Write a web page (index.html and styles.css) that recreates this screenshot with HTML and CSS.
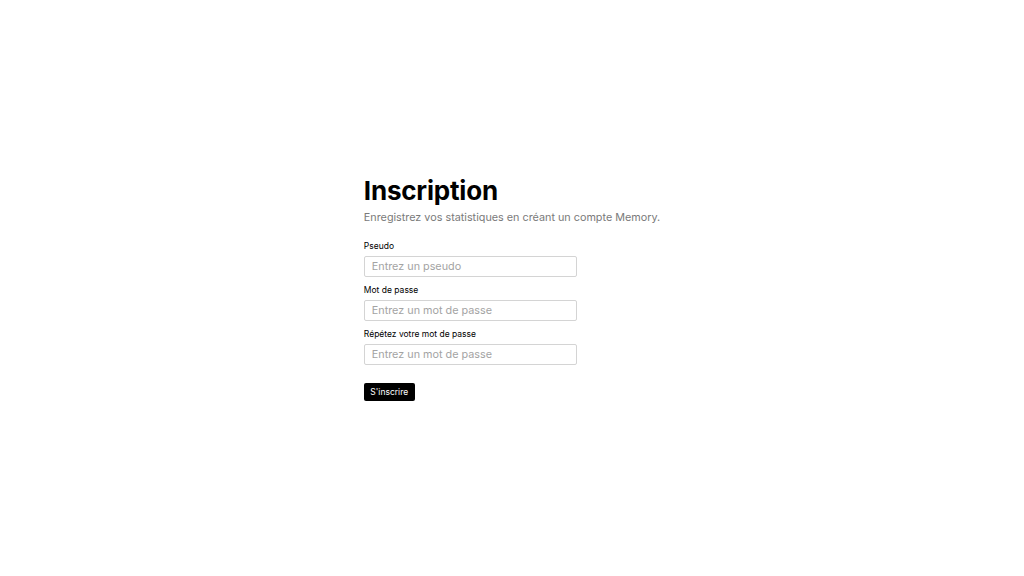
FILE: index.html
```html
<!DOCTYPE html>
<html lang="fr">
<head>
<meta charset="utf-8">
<title>Inscription</title>
<link rel="stylesheet" href="styles.css">
</head>
<body>
<main class="page">
  <form class="card">
    <h1 class="title">Inscription</h1>
    <p class="subtitle">Enregistrez vos statistiques en créant un compte Memory.</p>
    <div class="fields">
      <label class="field">
        <span class="label">Pseudo</span>
        <input class="input" type="text" placeholder="Entrez un pseudo">
      </label>
      <label class="field">
        <span class="label">Mot de passe</span>
        <input class="input" type="password" placeholder="Entrez un mot de passe">
      </label>
      <label class="field">
        <span class="label">Répétez votre mot de passe</span>
        <input class="input" type="password" placeholder="Entrez un mot de passe">
      </label>
    </div>
    <button class="button" type="button">S'inscrire</button>
  </form>
</main>
</body>
</html>
```
FILE: styles.css
```css
* { box-sizing: border-box; }
html, body { margin: 0; padding: 0; background: #fff; }
body { font-family: Inter, "Noto Sans", sans-serif; color: #000; }
.page {
  height: 100vh;
  display: flex;
  align-items: center;
  justify-content: center;
}
.card {
  display: flex;
  flex-direction: column;
  align-items: flex-start;
}
.title {
  margin: 0;
  font-size: 26px;
  font-weight: 700;
  line-height: 30px;
  letter-spacing: -0.2px;
}
.subtitle {
  margin: 4px 0 0;
  font-size: 10.8px;
  line-height: 16px;
  color: #7a7a7a;
  white-space: nowrap;
}
.fields {
  display: flex;
  flex-direction: column;
  gap: 7px;
  margin-top: 14px;
}
.field {
  display: flex;
  flex-direction: column;
  gap: 4px;
}
.label {
  font-size: 8.5px;
  font-weight: 400;
  line-height: 12px;
}
.input {
  width: 213px;
  height: 21px;
  border: 1px solid #d4d4d4;
  border-radius: 2px;
  padding: 0 7px;
  font-family: inherit;
  font-size: 10.8px;
  outline: none;
}
.input::placeholder { color: #a3a3a3; }
.button {
  margin-top: 18px;
  height: 18px;
  padding: 0 6.5px;
  background: #000;
  color: #fff;
  border: none;
  border-radius: 2px;
  font-family: inherit;
  font-size: 8.5px;
  font-weight: 400;
}
```
